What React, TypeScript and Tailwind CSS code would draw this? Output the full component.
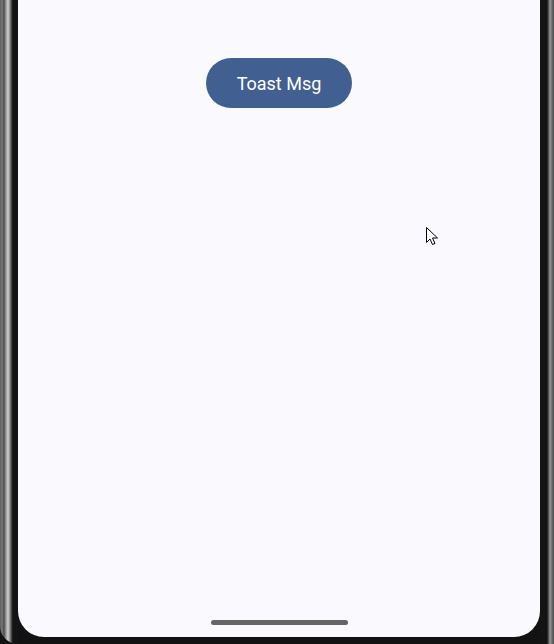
export default function App() {
  return (
    <div className="relative flex h-[644px] w-[554px] overflow-hidden bg-[#121212]" style={{ fontFamily: "Roboto, 'Noto Sans', sans-serif" }}>
      <div className="h-full w-[18px] rounded-bl-[30px] bg-[linear-gradient(to_right,#5a5a5a_0px,#7a7a7a_2px,#4a4a4a_4px,#9a9a9a_6px,#cfcfcf_8px,#8a8a8a_10px,#2a2a2a_12px,#141414_13px,#141414_18px)]" />
      <div className="flex h-[637px] flex-1 flex-col items-center justify-between rounded-b-[26px] bg-[#f9f9fe]">
        <button className="mt-[58px] flex h-[50px] w-[146px] items-center justify-center rounded-full bg-[#415f91] pt-px text-[18px] text-white">
          Toast Msg
        </button>
        <div className="mb-[12px] h-[5px] w-[137px] rounded-full bg-[#666666]" />
      </div>
      <div className="h-full w-[14px] bg-[linear-gradient(to_right,#141414_0px,#141414_7px,#3a3a3a_8px,#9a9a9a_10px,#6a6a6a_12px,#4a4a4a_14px)]" />
      <svg className="absolute left-[426px] top-[227px]" width="13" height="20" viewBox="0 0 13 20">
        <path d="M0.5 0.5 L0.5 15.5 L4 12 L6.5 17.5 L9 16.5 L6.5 11 L11.5 11 Z" fill="white" stroke="black" strokeWidth="1" strokeLinejoin="round" />
      </svg>
    </div>
  );
}
